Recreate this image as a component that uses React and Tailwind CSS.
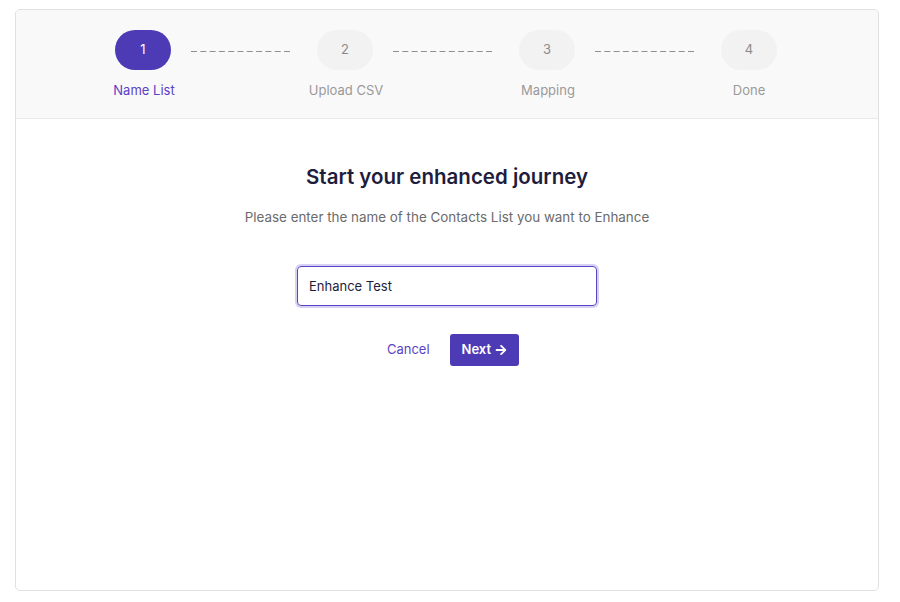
import { FaArrowRight } from 'react-icons/fa';

const steps = [
  { n: 1, label: 'Name List' },
  { n: 2, label: 'Upload CSV' },
  { n: 3, label: 'Mapping' },
  { n: 4, label: 'Done' },
];

function Dashes() {
  return (
    <svg width="102" height="2" className="ml-[20px] mr-[24px] mt-[2px] shrink-0">
      <line x1="0" y1="1.5" x2="102" y2="1.5" stroke="#8f8f8f" strokeWidth="1" strokeDasharray="6 3.3" />
    </svg>
  );
}

export default function App() {
  const active = 1;
  return (
    <div className="min-h-[602px] bg-white pl-[15px] pt-[9px] pb-[11px] font-['Inter',sans-serif]">
      <div className="w-[864px] h-[582px] border border-[#e0e0e0] rounded-[5px] flex flex-col overflow-hidden">
        <div className="h-[109px] bg-[#f9f9f9] border-b border-[#e8e8e8] pl-[99px] pt-[20px]">
          <div className="flex items-center">
            {steps.map((s, i) => (
              <div key={s.n} className="flex items-center">
                <div
                  className={
                    s.n === active
                      ? 'w-[56px] h-[40px] rounded-full bg-[#4d3bb5] text-white text-[13px] flex items-center justify-center'
                      : 'w-[56px] h-[40px] rounded-full bg-[#f2f2f2] text-[#8a8a8a] text-[13px] flex items-center justify-center'
                  }
                >
                  {s.n}
                </div>
                {i < steps.length - 1 && <Dashes />}
              </div>
            ))}
          </div>
          <div className="flex mt-[11px]">
            {steps.map((s, i) => (
              <div
                key={s.n}
                className={
                  (i < steps.length - 1 ? 'w-[202px] ' : 'w-[56px] ') +
                  'flex'
                }
              >
                <div
                  className={
                    s.n === active
                      ? 'w-[58px] flex justify-center whitespace-nowrap text-[13px] text-[#5b3fc4]'
                      : 'w-[58px] flex justify-center whitespace-nowrap text-[13px] text-[#999999]'
                  }
                >
                  {s.label}
                </div>
              </div>
            ))}
          </div>
        </div>

        <div className="flex flex-col items-center pt-[45px]">
          <h1 className="text-[20.5px] font-semibold text-[#1f1d3d] leading-[26px]">Start your enhanced journey</h1>
          <p className="mt-[17px] text-[13.4px] text-[#6b6b6b]">
            Please enter the name of the Contacts List you want to Enhance
          </p>
          <input
            defaultValue="Enhance Test"
            className="mt-[39px] w-[300px] h-[40px] px-[11px] text-[13px] text-[#1f1d3d] border border-[#5b44c4] rounded-[4px] outline-none ring-2 ring-[#d6d0f5]"
          />
          <div className="mt-[28px] ml-[12px] flex items-center gap-[20px]">
            <button className="text-[13px] text-[#5b44c4] px-[0px]">Cancel</button>
            <button className="h-[32px] px-[12px] rounded-[3px] bg-[#4d3bb5] text-white text-[13px] font-semibold flex items-center gap-[4px]">
              Next <FaArrowRight className="text-[12px]" />
            </button>
          </div>
        </div>
      </div>
    </div>
  );
}
